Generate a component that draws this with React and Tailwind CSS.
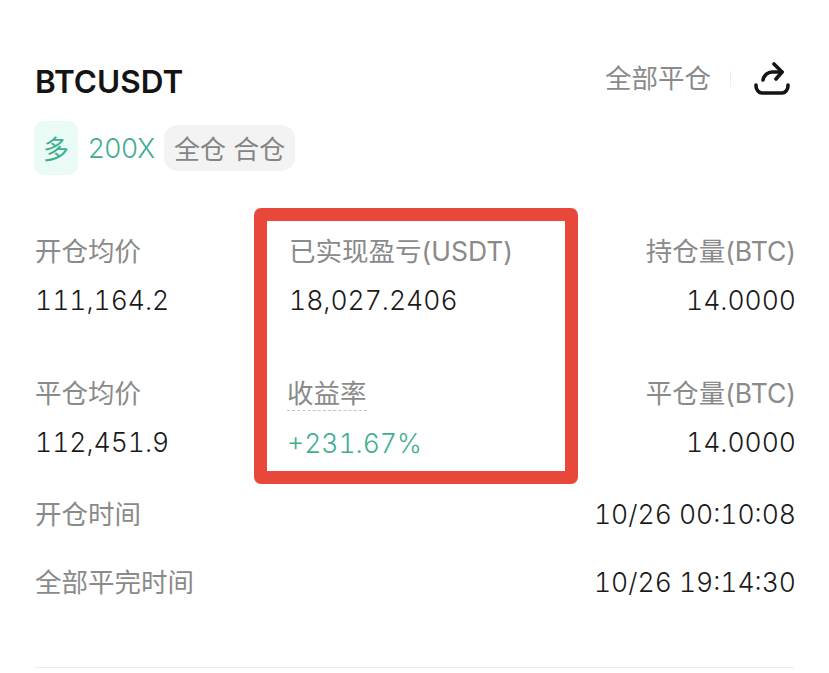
const baseFont = "font-['Inter','Noto_Sans_CJK_SC',sans-serif]";

function Stat({ label, value, right, dashed, green }) {
  return (
    <div className={`flex flex-col h-[142px] ${right ? 'items-end -mr-[2px]' : 'items-start'} ${dashed ? '-ml-[2px]' : ''}`}>
      <div className={`text-[26.5px] leading-[30px] text-[#8a8a8a] font-normal ${dashed ? 'border-b border-dashed border-[#c4c4c4] pb-[2px]' : ''}`}>
        {label}
      </div>
      <div className={`text-[26.5px] leading-[30px] font-light tabular-nums ${dashed ? 'mt-[17px]' : 'mt-[19px]'} ${green ? 'text-[#3fae92]' : 'text-[#1a1a1a]'}`}>
        {value}
      </div>
    </div>
  );
}

function TimeRow({ label, value }) {
  return (
    <div className="flex items-center justify-between h-[68px] -mr-[2px]">
      <span className="text-[26.5px] font-normal text-[#8a8a8a]">{label}</span>
      <span className="text-[26.5px] font-light text-[#1a1a1a] tabular-nums">{value}</span>
    </div>
  );
}

export default function App() {
  return (
    <div className={`${baseFont} w-[829px] h-[673px] overflow-hidden bg-white px-[35px] pt-[60px]`}>
      {/* title row */}
      <div className="flex items-center justify-between h-[44px]">
        <h1 className="text-[31.5px] font-semibold text-[#141414]">BTCUSDT</h1>
        <div className="flex items-center mb-[7px]">
          <span className="text-[26.5px] font-normal text-[#8a8a8a]">全部平仓</span>
          <div className="w-px h-[16px] bg-[#eeeeee] ml-[19px] mr-[23px]" />
          <svg width="36" height="34" viewBox="0 0 36 34" fill="none" stroke="#141414" strokeWidth="3.6" strokeLinecap="round" strokeLinejoin="round" className="mr-[4px]">
            <path d="M2 23v1c0 4 3 7 6 7h20c3 0 6-3 6-7v-1" />
            <path d="M9 18c1-5 5-8 9-8h10" />
            <path d="M20 2l8 8-6 7" />
          </svg>
        </div>
      </div>

      {/* tags */}
      <div className="flex items-center mt-[17px] h-[54px] -ml-px">
        <div className="w-[44px] h-[54px] pt-[3px] rounded-[10px] bg-[#eafaf4] flex items-center justify-center text-[26px] font-normal text-[#3fae92]">多</div>
        <span className="ml-[10px] mt-[3px] text-[27px] font-light text-[#3fae92]">200X</span>
        <div className="ml-[9px] h-[46px] px-[10px] pt-[3px] rounded-[14px] bg-[#f3f3f3] flex items-center text-[26px] text-[#858585]">全仓 合仓</div>
      </div>

      {/* stats */}
      <div className="flex h-[276px] mt-[33px]">
        <div className="w-[219px] pt-[28px]">
          <Stat label="开仓均价" value="111,164.2" />
          <Stat label="平仓均价" value="112,451.9" />
        </div>
        <div className="w-[324px] h-[276px] border-[13px] border-[#e8483a] rounded-[7px] pt-[15px] pl-[22px]">
          <Stat label="已实现盈亏(USDT)" value="18,027.2406" />
          <Stat label="收益率" value="+231.67%" dashed green />
        </div>
        <div className="flex-1 pt-[28px]">
          <Stat label="持仓量(BTC)" value="14.0000" right />
          <Stat label="平仓量(BTC)" value="14.0000" right />
        </div>
      </div>

      {/* times */}
      <div className="-mt-[3px]">
        <TimeRow label="开仓时间" value="10/26 00:10:08" />
        <TimeRow label="全部平完时间" value="10/26 19:14:30" />
      </div>

      <div className="h-px bg-[#ececec] mt-[50px]" />
    </div>
  );
}
